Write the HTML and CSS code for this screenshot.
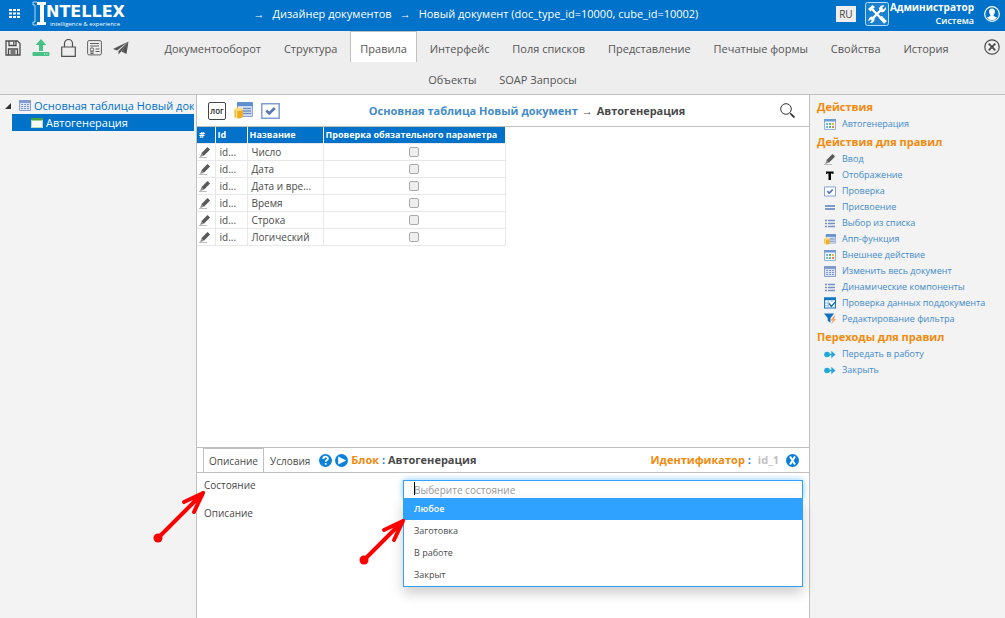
FILE: index.html
```html
<!DOCTYPE html>
<html lang="ru">
<head>
<meta charset="utf-8">
<title>Intellex — Дизайнер документов</title>
<link rel="stylesheet" href="styles.css">
</head>
<body>
<svg class="sprite" aria-hidden="true">
  <symbol id="i-pencil" viewBox="0 0 12 12"><path d="M0 11.500h8" stroke="#bbb"/><path d="M1 11 2.500 7.500l2.300 2.300z" fill="#888"/><path d="M3.600 8.600 9.800 2.200" stroke="#5a5a5a" stroke-width="3.600"/></symbol>
  <symbol id="i-text" viewBox="0 0 12 12"><path d="M2 2.500h7.500v2.600H8.500V4.500H7v6.500H4.500V4.500H3v.6H2z" fill="#000"/></symbol>
  <symbol id="i-check" viewBox="0 0 19 16"><path d="M.8.8h17.400v14.400H.8z" fill="#fff" stroke="#7f9fd3" stroke-width="1.500"/><path d="M5.300 7.500 8.300 10.500 13.800 5" fill="none" stroke="#5579b8" stroke-width="2.600"/></symbol>
  <symbol id="i-equal" viewBox="0 0 12 12"><path d="M1 5h10M1 8h10" stroke="#7d9ccd" stroke-width="2"/></symbol>
  <symbol id="i-list" viewBox="0 0 12 12"><path d="M1 3.500h2M1 6.500h2M1 9.500h2M4 3.500h7M4 6.500h7M4 9.500h7" stroke="#7590c8" stroke-width="1.400"/></symbol>
  <symbol id="i-db" viewBox="0 0 19 17"><path d="M3.500.7h14.800v13.600H3.500z" fill="#e3ebfa" stroke="#7590c0"/><path d="M3 .2h15.800v4H3z" fill="#5d8fd0"/><path d="M9 6.500h8M9 9h8M9 11.500h8" stroke="#6e8fc6" stroke-width="1.300"/><path d="M.5 7.500v7.500q4.200 3 8.400 0V7.500z" fill="#f0ad1e"/><path d="M2.500 8v8" stroke="#ffe28a" stroke-width="1.500"/><ellipse cx="4.700" cy="7.300" rx="4.200" ry="1.800" fill="#ffdb7d"/></symbol>
  <symbol id="i-grid" viewBox="0 0 12 11"><path d="M.5.500h11v10H.500z" fill="#f5faff" stroke="#8eb2e0"/><path d="M0 0h12v2.500H0z" fill="#6d9bd8"/><path d="M2 4h2v2H2zM2 7h2v2H2z" fill="#70b4ea"/><path d="M5 4h2v2H5zM5 7h2v2H5z" fill="#5fbb63"/><path d="M8 4h2v2H8z" fill="#f4b442"/><path d="M8 7h2v2H8z" fill="#e9824c"/></symbol>
  <symbol id="i-table" viewBox="0 0 12 11"><path d="M.5.500h11v10H.500z" fill="#dbe4f5" stroke="#8aa1d0"/><path d="M0 0h12v3H0z" fill="#819bcd"/><path d="M2 4.500h8M2 6.500h8M2 8.500h8" stroke="#7f98cb" stroke-dasharray="2 1"/></symbol>
  <symbol id="i-tablecheck" viewBox="0 0 13 12"><path d="M.6.600h11.800v10.800H.600z" fill="#fff" stroke="#1478c8" stroke-width="1.200"/><path d="M0 0h13v3H0z" fill="#1478c8"/><path d="M1 6h6M1 9h4M4.500 3v8M8.500 3v2" stroke="#8bbbe2"/><path d="M5.500 6.500 8 9.800 12 5" fill="none" stroke="#176cb2" stroke-width="1.500"/></symbol>
  <symbol id="i-filter" viewBox="0 0 13 12"><path d="M0 0h11L7 5v5L4 8V5z" fill="#0c70c4"/><path d="M11 2.500 7 7.500h2.500L7.500 12 13 6h-2.500l2-3.500z" fill="#f4a066"/></symbol>
  <symbol id="i-next" viewBox="0 0 12 12"><circle cx="3" cy="6.500" r="2.800" fill="#22a7dd"/><path d="M5 6.500h3" stroke="#22a7dd" stroke-width="1.500"/><path d="M7.300 2.800 11.500 6.500 7.300 10.200z" fill="#22a7dd"/></symbol>
</svg>

<header class="topbar">
  <button class="plain" aria-label="Меню"><svg width="11" height="9" viewBox="0 0 11 9"><path d="M0 1h3M4 1h3M8 1h3M0 4.500h3M4 4.500h3M8 4.500h3M0 8h3M4 8h3M8 8h3" stroke="#fff" stroke-width="2"/></svg></button>
  <a class="logo" href="#">
    <svg width="14" height="25" viewBox="0 0 14 25" aria-hidden="true"><path d="M5 1H1v3h2v17H1v3h4" fill="none" stroke="#b5d7f3"/><path d="M5 1h9v3h-2v17h2v3H5v-3h3V4H5z" fill="#fff"/></svg>
    <span class="logo-text"><span class="logo-name">NTELLEX</span><span class="logo-tag">intelligence &amp; experience</span></span>
  </a>
  <nav class="crumbs"><span>→</span><a href="#">Дизайнер документов</a><span>→</span><a href="#">Новый документ (doc_type_id=10000, cube_id=10002)</a></nav>
  <button class="lang">RU</button>
  <svg class="tools" width="24" height="24" viewBox="0 0 24 24" aria-hidden="true"><rect x=".5" y=".5" width="23" height="23" rx="2" fill="#1a80d0" stroke="#b9dcf7"/><path d="M6.500 6.500 18 18.500M17.500 6.500 6 18" stroke="#fff" stroke-width="2.400"/><path d="M3 7 7.500 3 10 5 5.500 9.500z" fill="#fff"/><path d="M19.500 3.500 17 6l1.500 1.500L21 5a4 4 0 0 1-6 4.500L14 6.500a4 4 0 0 1 5.500-3z" fill="#fff"/><path d="M3.500 19.500 6 17l1 1.500L5 21a4 4 0 0 0 4.500-5L7 14.500a4 4 0 0 0-3.500 5z" fill="#fff"/><path d="m15.500 15 5 5.500" stroke="#fff" stroke-width="3.600"/></svg>
  <div class="user"><b>Администратор</b><span class="role">Система</span></div>
  <button class="plain" aria-label="Профиль"><svg width="16" height="16" viewBox="0 0 16 16"><circle cx="8" cy="8" r="7.300" fill="#0072c9" stroke="#fff" stroke-width="1.200"/><path d="M8 2.500c2.200 0 3 1.500 2.900 3.300-.1 1.500-.6 2.400-1.300 3v1.300l3.400 1.500A6 6 0 0 1 3 11.600l3.400-1.500V8.800c-.7-.6-1.200-1.500-1.300-3C5 4 5.800 2.500 8 2.500z" fill="#fff"/></svg></button>
</header>

<div class="menubar">
  <div class="file-tools">
    <button class="plain" aria-label="Сохранить"><svg width="16" height="16" viewBox="0 0 16 16" fill="none" stroke="#4c4c4c" stroke-width="1.300"><path d="M1 1h11.500L15 3.500V15H1z"/><path d="M4 1v4.500h7V1M8.800 2v2.500M3.500 15V9h9v6M5.500 11h5M5.500 13h5"/></svg></button>
    <button class="plain" aria-label="Загрузить"><svg width="18" height="17" viewBox="0 0 18 17"><path d="M9 0 14.300 6H11v6H7V6H3.700z" fill="#47c286"/><rect x=".5" y="13" width="17" height="4" rx="1" fill="#47c286"/><path d="M12 15h1M14.500 15h1" stroke="#fff"/></svg></button>
    <button class="plain" aria-label="Блокировка"><svg width="15" height="18" viewBox="0 0 15 18" fill="none" stroke="#505050" stroke-width="1.200"><path d="M.7 8h13.600v9.300H.700zM3.500 8V4.500a4 4 0 0 1 8 0V8"/></svg></button>
    <button class="plain" aria-label="Сертификат"><svg width="15" height="16" viewBox="0 0 15 16" fill="none" stroke="#606060"><rect x=".6" y=".6" width="13.800" height="14.300" rx="1.500"/><path d="M3 3.500h9M3 6h9M8.500 9h4M8.500 11.500h4"/><circle cx="5" cy="9.500" r="1.700"/><path d="M4 11v3l1-.8 1 .8v-3"/></svg></button>
    <button class="plain" aria-label="Отправить"><svg width="16" height="14" viewBox="0 0 16 14"><path d="M15.500.5 0 8l4 1.500zM15.500.500 5.500 10v3.500l2.500-2.700zM15.500.500 13.500 13 8.500 10.500z" fill="#555"/></svg></button>
  </div>
  <button class="plain close" aria-label="Закрыть"><svg width="16" height="16" viewBox="0 0 16 16" fill="none" stroke="#4a4a4a" stroke-width="1.200"><circle cx="8" cy="8" r="7.200"/><path d="m4.700 4.700 6.600 6.600m0-6.600-6.600 6.600" stroke-width="1.800"/></svg></button>
  <nav class="sections">
    <a href="#">Документооборот</a>
    <a href="#">Структура</a>
    <a href="#" class="active">Правила</a>
    <a href="#">Интерфейс</a>
    <a href="#">Поля списков</a>
    <a href="#">Представление</a>
    <a href="#">Печатные формы</a>
    <a href="#">Свойства</a>
    <a href="#">История</a>
    <a href="#">Объекты</a>
    <a href="#">SOAP Запросы</a>
  </nav>
</div>

<div class="workspace">
  <aside class="tree">
    <a class="node" href="#"><svg class="twist" width="6" height="6" viewBox="0 0 6 6"><path d="M6 0v6H0z" fill="#333"/></svg><svg width="12" height="11"><use href="#i-table"/></svg><span>Основная таблица Новый док</span></a>
    <a class="node selected" href="#"><svg width="12" height="10" viewBox="0 0 12 10"><path d="M0 0h12v10H0z" fill="#f4fbf2"/><path d="M0 0h12v2.500H0z" fill="#43a047"/><path d="M.5 2v7.500h11V2" fill="none" stroke="#b5dcb8"/></svg><span>Автогенерация</span></a>
  </aside>

  <main class="center">
    <div class="grid-bar">
      <button class="log">лог</button>
      <button class="plain" aria-label="Данные"><svg width="19" height="17"><use href="#i-db"/></svg></button>
      <button class="plain" aria-label="Проверка"><svg width="19" height="16"><use href="#i-check"/></svg></button>
      <h1 class="title"><a href="#">Основная таблица Новый документ</a><span>→</span>Автогенерация</h1>
      <button class="plain" aria-label="Поиск"><svg width="15" height="15" viewBox="0 0 15 15" fill="none" stroke="#333"><circle cx="6" cy="6" r="5.300"/><path d="m9.800 9.800 1.500 1.500"/><path d="m10.800 10.800 3.700 3.700" stroke-width="1.800"/></svg></button>
    </div>

    <div class="grid-area">
      <table class="grid">
        <colgroup><col class="c-edit"><col class="c-id"><col class="c-name"><col class="c-flag"></colgroup>
        <thead><tr><th>#</th><th>Id</th><th>Название</th><th>Проверка обязательного параметра</th></tr></thead>
        <tbody>
          <tr><td><svg width="12" height="12"><use href="#i-pencil"/></svg></td><td>id...</td><td>Число</td><td><input type="checkbox" aria-label="Число"></td></tr>
          <tr><td><svg width="12" height="12"><use href="#i-pencil"/></svg></td><td>id...</td><td>Дата</td><td><input type="checkbox" aria-label="Дата"></td></tr>
          <tr><td><svg width="12" height="12"><use href="#i-pencil"/></svg></td><td>id...</td><td>Дата и вре...</td><td><input type="checkbox" aria-label="Дата и время"></td></tr>
          <tr><td><svg width="12" height="12"><use href="#i-pencil"/></svg></td><td>id...</td><td>Время</td><td><input type="checkbox" aria-label="Время"></td></tr>
          <tr><td><svg width="12" height="12"><use href="#i-pencil"/></svg></td><td>id...</td><td>Строка</td><td><input type="checkbox" aria-label="Строка"></td></tr>
          <tr><td><svg width="12" height="12"><use href="#i-pencil"/></svg></td><td>id...</td><td>Логический</td><td><input type="checkbox" aria-label="Логический"></td></tr>
        </tbody>
      </table>
    </div>

    <section class="details">
      <div class="detail-bar">
        <button class="tab active">Описание</button>
        <button class="tab">Условия</button>
        <button class="plain" aria-label="Справка"><svg width="13" height="13" viewBox="0 0 13 13"><circle cx="6.500" cy="6.500" r="6.500" fill="#0a82dc"/><path d="M4.300 5c0-3 4.600-3 4.600-.4 0 1.500-2.200 1.500-2.200 3.200M6.700 9v1.700" fill="none" stroke="#fff" stroke-width="1.800"/></svg></button>
        <button class="plain" aria-label="Запуск"><svg width="13" height="13" viewBox="0 0 13 13"><circle cx="6.500" cy="6.500" r="6.500" fill="#0a82dc"/><path d="m3.200 2.500 8 4-8 4z" fill="#fff"/></svg></button>
        <span class="block-name"><b class="orange">Блок</b> <b class="blue">:</b> <b>Автогенерация</b></span>
        <span class="ident"><b class="orange">Идентификатор</b> <b class="blue">:</b></span>
        <b class="ident-value">id_1</b>
        <button class="plain" aria-label="Удалить"><svg width="13" height="13" viewBox="0 0 13 13"><circle cx="6.500" cy="6.500" r="6.500" fill="#0a7ddc"/><path d="m4 2.500 5 8m0-8-5 8" stroke="#fff" stroke-width="2"/></svg></button>
      </div>
      <div class="form">
        <label for="state">Состояние</label>
        <div class="combo">
          <input id="state" type="text" role="combobox" aria-expanded="true" aria-controls="state-list" placeholder="Выберите состояние">
          <span class="caret"></span>
          <ul id="state-list" class="options" role="listbox">
            <li role="option" aria-selected="true">Любое</li>
            <li role="option" aria-selected="false">Заготовка</li>
            <li role="option" aria-selected="false">В работе</li>
            <li role="option" aria-selected="false">Закрыт</li>
          </ul>
        </div>
        <span>Описание</span>
      </div>
      <svg class="pointer pointer-label" width="56" height="56" viewBox="0 0 56 56" fill="none" stroke="#f00" stroke-width="4" stroke-linecap="round" aria-hidden="true"><circle cx="5" cy="51" r="4.500" fill="#f00" stroke="none"/><path d="M5 51 45 11M50 6 31 15M50 6 41 25"/><path d="m50 6-9 4 5 5z" fill="#f00" stroke-width="2"/></svg>
      <svg class="pointer pointer-option" width="50" height="50" viewBox="0 0 50 50" fill="none" stroke="#f00" stroke-width="4" stroke-linecap="round" aria-hidden="true"><circle cx="5" cy="45" r="4.500" fill="#f00" stroke="none"/><path d="M5 45 39 11M44 6 25 15M44 6 35 25"/><path d="m44 6-9 4 5 5z" fill="#f00" stroke-width="2"/></svg>
    </section>
  </main>

  <aside class="actions">
    <h2>Действия</h2>
    <a href="#"><svg width="12" height="11"><use href="#i-grid"/></svg>Автогенерация</a>
    <h2>Действия для правил</h2>
    <a href="#"><svg width="12" height="12"><use href="#i-pencil"/></svg>Ввод</a>
    <a href="#"><svg width="12" height="12"><use href="#i-text"/></svg>Отображение</a>
    <a href="#"><svg width="12" height="11"><use href="#i-check"/></svg>Проверка</a>
    <a href="#"><svg width="12" height="12"><use href="#i-equal"/></svg>Присвоение</a>
    <a href="#"><svg width="12" height="12"><use href="#i-list"/></svg>Выбор из списка</a>
    <a href="#"><svg width="12" height="11"><use href="#i-db"/></svg>Апп-функция</a>
    <a href="#"><svg width="12" height="11"><use href="#i-grid"/></svg>Внешнее действие</a>
    <a href="#"><svg width="12" height="11"><use href="#i-table"/></svg>Изменить весь документ</a>
    <a href="#"><svg width="12" height="12"><use href="#i-list"/></svg>Динамические компоненты</a>
    <a href="#"><svg width="12" height="12"><use href="#i-tablecheck"/></svg>Проверка данных поддокумента</a>
    <a href="#"><svg width="12" height="12"><use href="#i-filter"/></svg>Редактирование фильтра</a>
    <h2>Переходы для правил</h2>
    <a href="#"><svg width="12" height="12"><use href="#i-next"/></svg>Передать в работу</a>
    <a href="#"><svg width="12" height="12"><use href="#i-next"/></svg>Закрыть</a>
  </aside>
</div>
</body>
</html>
```

FILE: styles.css
```css
* { box-sizing: border-box; }

body {
  margin: 0;
  min-height: 100vh;
  display: flex;
  flex-direction: column;
  font: 10px/16px "Open Sans", "Noto Sans", sans-serif;
  color: #4a4a4a;
  background: #fff;
}

a { color: inherit; text-decoration: none; }
button { font: inherit; color: inherit; cursor: pointer; }
svg { display: block; flex: none; }
.sprite { position: absolute; width: 0; height: 0; }
.plain { padding: 0; border: 0; background: none; }

/* Top bar */
.topbar {
  height: 31px;
  display: flex;
  align-items: center;
  padding: 0 5px 4px 9px;
  background: #0072c9;
  color: #fff;
}
.logo { display: flex; margin-left: 12px; width: 94px; }
.logo-text { display: flex; flex-direction: column; padding-top: 2px; }
.logo-name { font: 700 16px/18px "DejaVu Sans", sans-serif; }
.logo-tag { font-size: 6px; line-height: 6px; padding-left: 4px; white-space: nowrap; }
.crumbs {
  flex: 1;
  display: flex;
  justify-content: center;
  gap: 8px;
  padding-right: 10px;
  font-size: 11px;
  font-weight: 500;
  white-space: nowrap;
}
.lang {
  width: 20px;
  height: 16px;
  padding: 0;
  border: 0;
  background: #eee;
  color: #444;
  line-height: 16px;
}
.tools { margin: 0 1px 0 9px; }
.user {
  display: flex;
  flex-direction: column;
  align-items: flex-end;
  margin-right: 10px;
  line-height: 13px;
}
.role { font-size: 9px; font-weight: 600; }

/* Section menu */
.menubar {
  padding-bottom: 1px;
  background: #eee;
  border-bottom: 1px solid #c0c0c0;
  font-size: 11px;
}
.file-tools { float: left; height: 31px; padding: 2px 0 0 5px; display: flex; gap: 11px; align-items: center; }
.close { float: right; height: 31px; padding-right: 5px; }
.sections { text-align: center; }
.sections a {
  display: inline-block;
  height: 31px;
  padding: 0 9px;
  border: 1px solid transparent;
  border-bottom: 0;
  line-height: 33px;
  color: #555;
  vertical-align: top;
}
.sections .active { background: #fff; border-color: #c0c0c0; }

/* Workspace */
.workspace { flex: 1; display: grid; grid-template-columns: 197px minmax(0, 1fr) 196px; }

.tree { background: #f3f3f3; border-right: 1px solid #c0c0c0; padding: 2px 2px 0 5px; font-size: 11px; }
.node {
  display: flex;
  align-items: center;
  height: 17px;
  gap: 3px;
  color: #0072c9;
  white-space: nowrap;
}
.node span { overflow: hidden; }
.twist { margin-right: 5px; }
.selected { margin-left: 7px; padding-left: 19px; background: #0072c9; color: #fff; }

.center { display: flex; flex-direction: column; }
.grid-bar {
  display: flex;
  align-items: center;
  gap: 8px;
  height: 32px;
  padding: 0 14px 0 11px;
  border-bottom: 1px solid #c0c0c0;
}
.log {
  width: 18px;
  height: 18px;
  padding: 0;
  border: 1px solid #444;
  border-radius: 2px;
  background: #fff;
  color: #222;
  font-size: 8px;
  font-weight: 600;
  line-height: 14px;
}
.title {
  flex: 1;
  display: flex;
  justify-content: center;
  gap: 4px;
  margin: 0;
  padding-right: 6px;
  font-size: 11px;
  white-space: nowrap;
}
.title a { color: #428bca; }

.grid-area { flex: 1; }
.grid { border-collapse: collapse; table-layout: fixed; width: 308px; }
.c-edit { width: 18px; }
.c-id { width: 32px; }
.c-name { width: 76px; }
.c-flag { width: 182px; }
.grid th {
  height: 16px;
  padding: 0 2px;
  background: #0072c9;
  border-right: 1px solid #fff;
  color: #fff;
  font-size: 9px;
  font-weight: 700;
  line-height: 14px;
  text-align: left;
  white-space: nowrap;
}
.grid td {
  height: 17px;
  padding: 0 4px;
  border: 1px solid #e8e8e8;
  border-left: 0;
  line-height: 14px;
}
.grid td:first-child { padding: 0 2px; }
.grid td:last-child { text-align: center; }
.grid input {
  appearance: none;
  display: block;
  width: 10px;
  height: 10px;
  margin: 0 auto;
  border: 1px solid #aaa;
  border-radius: 2px;
  background: #eee;
}

/* Block details */
.details { position: relative; height: 171px; border-top: 1px solid #c0c0c0; }
.detail-bar {
  display: flex;
  align-items: center;
  height: 25px;
  padding: 0 10px 0 6px;
  border-bottom: 1px solid #c0c0c0;
}
.detail-bar .plain { margin-right: 3px; }
.detail-bar .plain:last-child { margin-right: 0; }
.tab {
  align-self: stretch;
  padding: 0 5px;
  border: 1px solid transparent;
  border-bottom: 0;
  background: none;
}
.tab.active { border-color: #c0c0c0; }
.tab + .plain { margin-left: 3px; }
.block-name { flex: 1; font-size: 11px; }
.ident { font-size: 11px; }
.ident-value { margin: 0 7px; font-size: 11px; color: #c0c0c0; }
.orange { color: #f28a0c; }
.blue { color: #0a82dc; }

.form {
  display: grid;
  grid-template-columns: 199px 1fr;
  row-gap: 9px;
  padding: 7px 6px 0 7px;
  line-height: 10px;
}
.combo { position: relative; height: 19px; }
.combo input {
  display: block;
  width: 100%;
  height: 18px;
  padding: 0 10px;
  border: 1px solid #2fa1ff;
  border-bottom: 0;
  outline: 0;
  font: inherit;
  box-shadow: 0 0 6px rgba(47, 161, 255, .6);
}
.combo input::placeholder { color: #999; }
.caret { position: absolute; left: 11px; top: 2px; width: 1px; height: 13px; background: #000; }
.options {
  position: absolute;
  top: 18px;
  left: 0;
  right: 0;
  margin: 0;
  padding: 0;
  list-style: none;
  background: #fff;
  border: 1px solid #2fa1ff;
  border-top: 0;
  box-shadow: 0 6px 12px rgba(0, 0, 0, .2);
  font-size: 9px;
}
.options li { padding: 0 10px; line-height: 22px; }
.options [aria-selected="true"] { background: #2fa1ff; color: #fff; font-weight: 600; }

.pointer { position: absolute; pointer-events: none; }
.pointer-label { left: -44px; top: 39px; }
.pointer-option { left: 162px; top: 67px; }

/* Action list */
.actions { background: #f3f3f3; border-left: 1px solid #c0c0c0; padding: 2px 0 0 7px; }
.actions h2 { margin: 0; font-size: 11px; line-height: 19px; color: #f28a0c; }
.actions a {
  display: flex;
  align-items: center;
  gap: 6px;
  height: 16px;
  padding-left: 7px;
  color: #428bca;
  font-size: 9px;
  white-space: nowrap;
}
```
